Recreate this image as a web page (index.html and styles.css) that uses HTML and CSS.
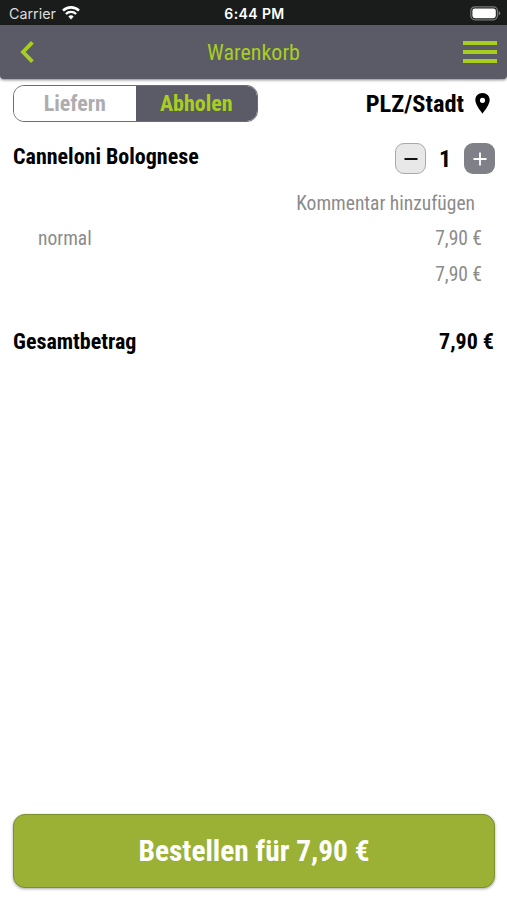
FILE: index.html
```html
<!DOCTYPE html>
<html lang="de">
<head>
  <meta charset="UTF-8">
  <meta name="viewport" content="width=device-width, initial-scale=1.0">
  <link rel="stylesheet" href="styles.css">
  <title>Warenkorb</title>
</head>
<body>

  <div class="statusbar">
    <div class="carrier">
      <span>Carrier</span>
      <svg width="18" height="14" viewBox="0 0 18 14">
        <path d="M1 4.6 A11.5 11.5 0 0 1 17 4.6" fill="none" stroke="#fff" stroke-width="2.6"/>
        <path d="M3.9 8 A7.2 7.2 0 0 1 14.1 8" fill="none" stroke="#fff" stroke-width="2.4"/>
        <path d="M6.3 10.6 A4 4 0 0 1 11.7 10.6 L9 13.6 Z" fill="#fff"/>
      </svg>
    </div>
    <span class="time">6:44 PM</span>
    <svg class="battery" width="31" height="15" viewBox="0 0 31 15">
      <rect x="0.8" y="0.8" width="26.6" height="13" rx="4" fill="none" stroke="#77787a" stroke-width="1.2"/>
      <rect x="2.4" y="2.4" width="23.4" height="9.8" rx="2.4" fill="#fff"/>
      <path d="M28.6 4.8 Q32 7.3 28.6 9.8 Z" fill="#77787a"/>
    </svg>
  </div>

  <header>
    <svg class="back" width="14" height="22" viewBox="0 0 14 22">
      <path d="M12.4 1.4 L3 11 L12.4 20.6" fill="none" stroke="#a8cf20" stroke-width="3.8"/>
    </svg>
    <h1>Warenkorb</h1>
    <div class="menu"><i></i><i></i><i></i></div>
  </header>

  <main>
    <div class="options">
      <div class="switch">
        <button class="deliver">Liefern</button>
        <button class="pickup">Abholen</button>
      </div>
      <div class="place">
        <span>PLZ/Stadt</span>
        <svg width="15" height="21" viewBox="0 0 15 21">
          <path fill-rule="evenodd" d="M7.5 0 C3.3 0 0.3 3.1 0.3 7.1 C0.3 12.3 7.5 20.6 7.5 20.6 C7.5 20.6 14.7 12.3 14.7 7.1 C14.7 3.1 11.7 0 7.5 0 Z M7.5 4.7 A2.6 2.6 0 1 1 7.5 9.9 A2.6 2.6 0 1 1 7.5 4.7 Z"/>
        </svg>
      </div>
    </div>

    <div class="item">
      <h2>Canneloni Bolognese</h2>
      <div class="amount">
        <button class="minus">
          <svg width="14" height="14" viewBox="0 0 14 14"><path d="M0.5 7 H13.5" stroke="#111" stroke-width="2"/></svg>
        </button>
        <span>1</span>
        <button class="plus">
          <svg width="14" height="14" viewBox="0 0 14 14"><path d="M0.5 7 H13.5 M7 0.5 V13.5" stroke="#fff" stroke-width="1.8"/></svg>
        </button>
      </div>
    </div>

    <div class="comment">Kommentar hinzufügen</div>
    <div class="row"><span>normal</span><span>7,90 €</span></div>
    <div class="row"><span></span><span>7,90 €</span></div>

    <div class="total"><span>Gesamtbetrag</span><span>7,90 €</span></div>
  </main>

  <footer>
    <button class="order">Bestellen für 7,90 €</button>
  </footer>

</body>
</html>
```
FILE: styles.css
```css
* {
  box-sizing: border-box;
}

body {
  font-family: "Roboto Condensed", Roboto, sans-serif;
  font-stretch: 75%;
  margin: 0;
  height: 900px;
  display: flex;
  flex-direction: column;
  background-color: white;
  color: black;
  overflow: hidden;
}

h1, h2 {
  margin: 0;
}

button {
  font: inherit;
  font-stretch: inherit;
  border: none;
  padding: 0;
}

svg {
  display: block;
}

.statusbar {
  height: 25px;
  display: grid;
  grid-template-columns: 1fr auto 1fr;
  align-items: center;
  padding: 2px 6px 0 8px;
  background-color: #1a1c1b;
  color: white;
  font-family: Inter, sans-serif;
  font-stretch: normal;
  font-size: 14.3px;
  line-height: 22px;
}

.carrier {
  display: flex;
  align-items: center;
  gap: 6px;
  padding-left: 1px;
  color: #dddddd;
}

.carrier svg {
  margin-top: -2px;
}

.time {
  font-size: 14px;
  font-weight: 600;
  letter-spacing: 0.4px;
}

.battery {
  justify-self: end;
}

header {
  height: 54px;
  display: grid;
  grid-template-columns: 1fr auto 1fr;
  align-items: center;
  padding: 0 10px;
  background-color: #5b5a67;
  border-radius: 0 0 4px 4px;
  box-shadow: 0 1px 3px rgba(0, 0, 0, 0.5);
}

.back {
  margin-left: 10px;
}

h1 {
  color: #a8cf20;
  font-size: 22px;
  font-weight: 400;
}

.menu {
  justify-self: end;
  width: 34px;
  display: grid;
  gap: 5px;
}

.menu i {
  height: 4px;
  background-color: #a8cf20;
}

main {
  flex: 1;
  padding: 6px 13px 0;
}

.options {
  display: flex;
  justify-content: space-between;
  align-items: center;
}

.switch {
  display: flex;
  width: 245px;
  height: 37px;
  border: 1px solid #6d6c75;
  border-radius: 11px;
  overflow: hidden;
  font-size: 22px;
  font-weight: 700;
}

.switch button {
  flex: 1;
}

.deliver {
  background-color: white;
  color: #adadb0;
}

.pickup {
  background-color: #5b5a67;
  color: #a8cf20;
}

.place {
  display: flex;
  align-items: center;
  gap: 11px;
  padding-right: 4px;
  font-size: 24.4px;
  font-weight: 700;
}

.item {
  display: flex;
  justify-content: space-between;
  margin-top: 21px;
}

h2 {
  font-size: 22px;
  font-weight: 700;
  line-height: 28px;
}

.amount {
  display: flex;
  align-items: center;
  margin-right: -1px;
  font-size: 24px;
  font-weight: 700;
}

.amount span {
  width: 38px;
  text-align: center;
}

.amount button {
  width: 31px;
  height: 31px;
  display: grid;
  place-items: center;
  border-radius: 9px;
}

.amount .minus {
  background-color: #e8e8e8;
  border: 1px solid #a9a9a9;
}

.amount .plus {
  background-color: #7f8088;
}

.comment {
  margin-top: 12px;
  padding-right: 19px;
  text-align: right;
  color: #8b8b8b;
  font-size: 19.5px;
  line-height: 35px;
}

.row {
  display: flex;
  justify-content: space-between;
  padding: 0 12px 0 25px;
  color: #8b8b8b;
  font-size: 19.5px;
  line-height: 35.5px;
}

.total {
  display: flex;
  justify-content: space-between;
  margin-top: 35px;
  font-size: 22px;
  font-weight: 700;
  line-height: 30px;
}

footer {
  padding: 0 12px 12px 13px;
}

.order {
  width: 100%;
  height: 74px;
  border: 1px solid #7b9130;
  border-radius: 12px;
  background-color: #9ab135;
  box-shadow: 0 1px 3px rgba(0, 0, 0, 0.35);
  color: white;
  font-size: 29.4px;
  font-weight: 700;
}
```
